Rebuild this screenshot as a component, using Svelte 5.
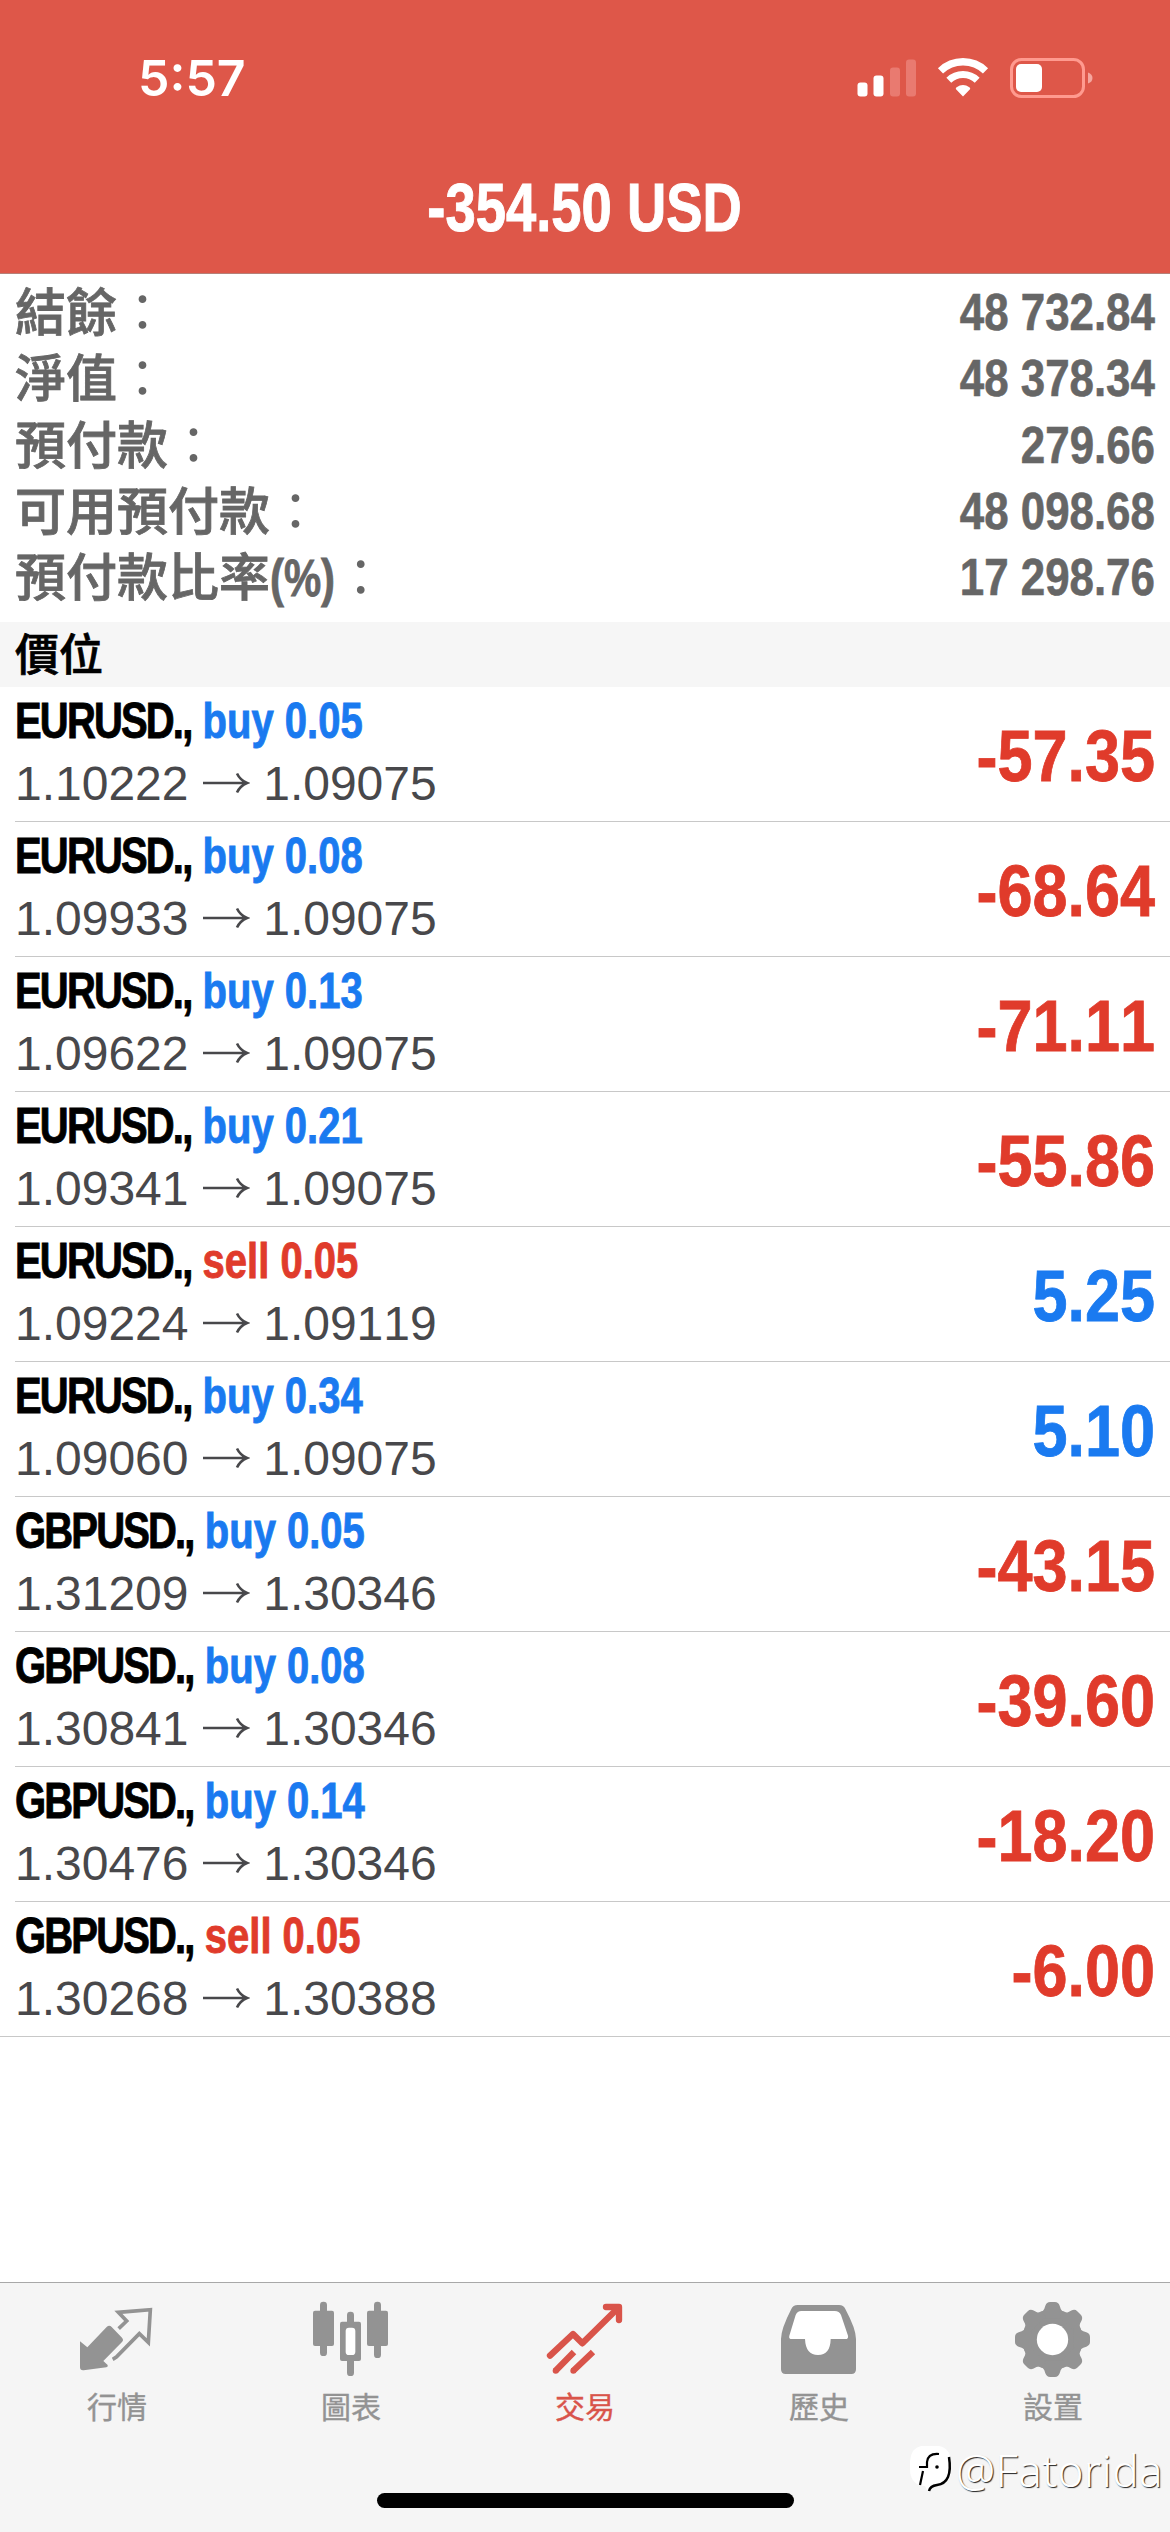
<script lang="ts">
    type Position = {
        symbol: string;
        side: "buy" | "sell";
        volume: string;
        open: string;
        current: string;
        profit: string;
    };

    const total = "-354.50 USD";

    const summary = [
        { label: "結餘", unit: "", value: "48 732.84" },
        { label: "淨值", unit: "", value: "48 378.34" },
        { label: "預付款", unit: "", value: "279.66" },
        { label: "可用預付款", unit: "", value: "48 098.68" },
        { label: "預付款比率", unit: "(%)", value: "17 298.76" },
    ];

    const positions: Position[] = [
        { symbol: "EURUSD.", side: "buy", volume: "0.05", open: "1.10222", current: "1.09075", profit: "-57.35" },
        { symbol: "EURUSD.", side: "buy", volume: "0.08", open: "1.09933", current: "1.09075", profit: "-68.64" },
        { symbol: "EURUSD.", side: "buy", volume: "0.13", open: "1.09622", current: "1.09075", profit: "-71.11" },
        { symbol: "EURUSD.", side: "buy", volume: "0.21", open: "1.09341", current: "1.09075", profit: "-55.86" },
        { symbol: "EURUSD.", side: "sell", volume: "0.05", open: "1.09224", current: "1.09119", profit: "5.25" },
        { symbol: "EURUSD.", side: "buy", volume: "0.34", open: "1.09060", current: "1.09075", profit: "5.10" },
        { symbol: "GBPUSD.", side: "buy", volume: "0.05", open: "1.31209", current: "1.30346", profit: "-43.15" },
        { symbol: "GBPUSD.", side: "buy", volume: "0.08", open: "1.30841", current: "1.30346", profit: "-39.60" },
        { symbol: "GBPUSD.", side: "buy", volume: "0.14", open: "1.30476", current: "1.30346", profit: "-18.20" },
        { symbol: "GBPUSD.", side: "sell", volume: "0.05", open: "1.30268", current: "1.30388", profit: "-6.00" },
    ];

    const tabs = [
        { id: "quotes", label: "行情" },
        { id: "chart", label: "圖表" },
        { id: "trade", label: "交易" },
        { id: "history", label: "歷史" },
        { id: "settings", label: "設置" },
    ];

    let active = $state("trade");
</script>

<div class="screen">
    <header>
        <div class="status">
            <span class="time">5:57</span>
            <div class="indicators">
                <svg width="60" height="40" viewBox="0 0 60 40">
                    <rect x="0.5" y="24.5" width="10" height="14" rx="3" fill="#fff" />
                    <rect x="16.5" y="17.5" width="10" height="21" rx="3" fill="#fff" />
                    <rect x="33" y="9.5" width="10" height="29" rx="3" fill="#e97a70" />
                    <rect x="49" y="1.5" width="10" height="37" rx="3" fill="#e97a70" />
                </svg>
                <svg width="52" height="40" viewBox="0 0 52 40">
                    <path d="M3.5 12.8a32.5 32.5 0 0 1 45 0" fill="none" stroke="#fff" stroke-width="7.4" />
                    <path d="M11.8 22.2a20.5 20.5 0 0 1 28.4 0" fill="none" stroke="#fff" stroke-width="7" />
                    <path d="M26 38.5l-7-7.2q-.7-1.2.6-2.1a11 11 0 0 1 12.8 0q1.3.9.6 2.1z" fill="#fff" />
                </svg>
                <svg width="86" height="42" viewBox="0 0 86 42">
                    <rect x="2.5" y="2.5" width="72" height="37" rx="10" fill="none" stroke="#ff9a8f" stroke-width="3" />
                    <rect x="7" y="7" width="26" height="28" rx="5" fill="#fff" />
                    <path d="M79 15.5q4.5 1.5 4.5 5.5t-4.5 5.5z" fill="#f5a69e" />
                </svg>
            </div>
        </div>
        <h1><span>{total}</span></h1>
    </header>

    <section class="summary">
        {#each summary as item}
            <div class="line">
                <span class="label">{item.label}{#if item.unit}<i>{item.unit}</i>{/if}<b>：</b></span>
                <span class="value">{item.value}</span>
            </div>
        {/each}
    </section>

    <h2>價位</h2>

    <ul>
        {#each positions as p}
            <li>
                <div class="info">
                    <div class="deal">
                        <span class="symbol">{p.symbol},</span> <span class={p.side}>{p.side} {p.volume}</span>
                    </div>
                    <div class="prices">
                        {p.open}
                        <svg width="48" height="24" viewBox="0 0 48 24">
                            <path d="M1 12h44M35 2.5q3 6.5 10 9.5q-7 3-10 9.5" fill="none" stroke="#48484b" stroke-width="2.6" />
                        </svg>
                        {p.current}
                    </div>
                </div>
                <div class="profit" class:loss={p.profit.startsWith("-")}>{p.profit}</div>
            </li>
        {/each}
    </ul>

    <nav>
        {#each tabs as tab}
            <button class:active={active === tab.id} onclick={() => (active = tab.id)}>
                {#if tab.id === "quotes"}
                    <svg viewBox="231 90 240 240">
                        <path d="M240 214l22 18 58-61q8-7 15 0l31 32q6 7 0 13l-56 57 13 12q2 6-4 7l-68 9q-11 1-11-9z" fill="currentColor" />
                        <path d="M356 176l24-23-25-26 96-8-6 98-27-26-69 70q-7 5-11 7" fill="none" stroke="currentColor" stroke-width="11" />
                    </svg>
                {:else if tab.id === "chart"}
                    <svg viewBox="933 90 240 240" fill="currentColor">
                        <rect x="960" y="95" width="21" height="163" rx="10" />
                        <rect x="939" y="122" width="63" height="106" rx="6" />
                        <rect x="1122" y="95" width="21" height="169" rx="10" />
                        <rect x="1101" y="122" width="63" height="106" rx="6" />
                        <rect x="1041" y="125" width="21" height="193" rx="10" />
                        <rect x="1020" y="155" width="63" height="118" rx="6" />
                        <rect x="1037" y="173" width="29" height="82" rx="10" fill="#fff" />
                    </svg>
                {:else if tab.id === "trade"}
                    <svg viewBox="375 90 240 240" fill="none" stroke="currentColor" stroke-width="19">
                        <path d="M390 257l69-65 28 28 108-107" stroke-linecap="round" stroke-linejoin="round" />
                        <path d="M558 111h39v39" stroke-linecap="round" stroke-linejoin="round" />
                        <path d="M570 115h27v27z" fill="currentColor" stroke="none" />
                        <path d="M462 246l-56 57M519 246l-60 57" />
                        <circle cx="407" cy="302" r="9" fill="currentColor" stroke="none" />
                        <circle cx="460" cy="302" r="9" fill="currentColor" stroke="none" />
                    </svg>
                {:else if tab.id === "history"}
                    <svg viewBox="1077 90 240 240">
                        <path d="M1133 105h124q14 0 19 12 32 60 32 90v91q0 14-14 14h-197q-14 0-14-14v-91q0-30 31-90 5-12 19-12z" fill="currentColor" />
                        <path d="M1144 123h100q14 0 19 12l21 62q2 10-8 10h-44q-1 48-38 48t-39-48h-39q-11 0-8-10l19-62q5-12 17-12z" fill="#fff" />
                    </svg>
                {:else}
                    <svg viewBox="459 90 240 240">
                        <circle cx="577.5" cy="208.5" r="91" fill="currentColor" />
                        {#each [0, 45, 90, 135, 180, 225, 270, 315] as angle}
                            <path
                                d="M543 126q7-2 10-10l3-9q4-11 14-11h15q10 0 14 11l3 9q3 8 10 10v20h-69z"
                                transform="rotate({angle} 577.5 208.5)"
                                fill="currentColor"
                            />
                        {/each}
                        <circle cx="577.5" cy="208.5" r="47" fill="#fff" />
                    </svg>
                {/if}
                <span>{tab.label}</span>
            </button>
        {/each}
        <div class="home"></div>
        <div class="watermark">
            <svg width="46" height="50" viewBox="0 0 46 50">
                <path d="M12 1h18q12 2 12 18v7q0 13-14 15-7 2-9 6l-3-6Q1 40 1 24v-8Q2 3 12 1z" fill="#fff" />
                <path d="M40 12q4 26-12 28-7 1-8 6" fill="none" stroke="#000" stroke-width="2.5" />
                <path d="M30 9q-11-1-12 8v5h-8M14 26l-3 14" fill="none" stroke="#000" stroke-width="2.2" />
                <circle cx="28" cy="22" r="1.8" />
            </svg>
            <span>@Fatorida</span>
        </div>
    </nav>
</div>

<style>
    :global(body) {
        margin: 0;
        background: #fff;
    }

    .screen {
        width: 1170px;
        height: 2532px;
        display: flex;
        flex-direction: column;
        overflow: hidden;
        font-family: "Liberation Sans", "Noto Sans CJK TC", sans-serif;
        font-kerning: none;
        background: #fff;
    }

    header {
        box-sizing: border-box;
        height: 274px;
        flex: none;
        background: #de5749;
        border-bottom: 1px solid #b58078;
        color: #fff;
    }
    .status {
        height: 156px;
        box-sizing: border-box;
        padding: 0 75px 0 138px;
        display: flex;
        align-items: center;
        justify-content: space-between;
    }
    .time {
        font-family: Inter, sans-serif;
        font-weight: 600;
        font-size: 50px;
    }
    .indicators {
        display: flex;
        align-items: center;
        gap: 20px;
    }
    h1 {
        margin: 0;
        font-size: 68px;
        line-height: 102px;
        text-align: center;
    }
    h1 span {
        display: inline-block;
        transform: scaleX(0.8);
        -webkit-text-stroke: 1px;
    }

    .summary {
        flex: none;
        height: 348px;
        box-sizing: border-box;
        padding: 6px 15px 0;
        color: #666;
    }
    .line {
        display: flex;
        justify-content: space-between;
        height: 66.25px;
        line-height: 66px;
        font-size: 51px;
        font-weight: 500;
        white-space: nowrap;
    }
    .label {
        padding-top: 1px;
        -webkit-text-stroke: 0.8px;
    }
    .label i {
        display: inline-block;
        font-style: normal;
        font-weight: bold;
        transform: scaleX(0.82);
        transform-origin: left;
        margin-right: -14px;
    }
    .label b {
        font-weight: 400;
        -webkit-text-stroke: 0;
    }
    .value {
        font-weight: bold;
        transform: scaleX(0.86);
        transform-origin: right;
        -webkit-text-stroke: 0.6px;
    }

    h2 {
        flex: none;
        margin: 0;
        height: 65px;
        line-height: 67px;
        padding-left: 15px;
        font-size: 44px;
        font-weight: 500;
        color: #000;
        background: #f6f6f6;
        -webkit-text-stroke: 0.7px;
    }

    ul {
        list-style: none;
        margin: 0;
        padding: 0;
        border-bottom: 1px solid #c8c8c8;
    }
    li {
        box-sizing: border-box;
        height: 135px;
        margin-left: 15px;
        padding-right: 15px;
        display: flex;
        align-items: center;
        justify-content: space-between;
        border-bottom: 1px solid #c8c8c8;
    }
    li:last-child {
        height: 134px;
        border-bottom: none;
    }
    .info {
        white-space: nowrap;
    }
    .deal {
        margin-top: -1px;
        font-size: 50px;
        font-weight: bold;
        line-height: 61px;
        transform: scaleX(0.8);
        transform-origin: left;
        -webkit-text-stroke: 0.9px;
    }
    .symbol {
        letter-spacing: -2.3px;
        color: #000;
    }
    .buy {
        color: #1a7af0;
    }
    .sell {
        color: #e03b2b;
    }
    .prices {
        font-size: 48px;
        line-height: 64px;
        color: #48484b;
    }
    .prices svg {
        vertical-align: 5px;
    }
    .profit {
        padding-top: 4px;
        font-size: 72px;
        font-weight: bold;
        color: #1a7af0;
        transform: scaleX(0.875);
        transform-origin: right;
        -webkit-text-stroke: 0.8px;
    }
    .profit.loss {
        color: #e03b2b;
    }

    nav {
        position: relative;
        margin-top: auto;
        flex: none;
        box-sizing: border-box;
        height: 250px;
        display: flex;
        align-items: flex-start;
        border-top: 1px solid #a8a8a8;
        background: #f5f5f5;
    }
    button {
        all: unset;
        flex: 1;
        display: flex;
        flex-direction: column;
        align-items: center;
        padding-top: 17px;
        color: #939393;
    }
    button.active {
        color: #d9544a;
    }
    button svg {
        width: 80px;
        height: 80px;
    }
    button span {
        margin-top: 8px;
        font-size: 30px;
        line-height: 40px;
        -webkit-text-stroke: 0.4px;
    }

    .home {
        position: absolute;
        left: 377px;
        bottom: 24px;
        width: 417px;
        height: 15px;
        border-radius: 8px;
        background: #000;
    }
    .watermark {
        position: absolute;
        right: 7px;
        bottom: 34px;
        display: flex;
        align-items: center;
        gap: 1px;
        font-family: "Noto Sans", sans-serif;
        font-size: 44px;
        font-weight: 300;
        letter-spacing: 0.4px;
        line-height: 56px;
        color: #fff;
        text-shadow: 1px 1px 1px #222;
    }
</style>
